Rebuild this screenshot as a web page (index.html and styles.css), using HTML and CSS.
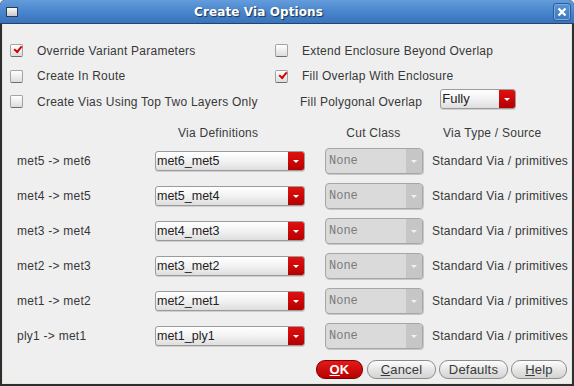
FILE: index.html
```html
<!DOCTYPE html>
<html>
<head>
    <meta charset="UTF-8">
    <title>Create Via Options</title>
    <link rel="stylesheet" href="styles.css">
</head>
<body>
<div class="window">
    <div class="titlebar">
        <span class="winicon"></span>
        <span class="title">Create Via Options</span>
        <span class="closebtn">
            <svg width="10" height="10" viewBox="0 0 10 10"><path d="M1.5 1.5 L8.5 8.5 M8.5 1.5 L1.5 8.5" stroke="#fff" stroke-width="2.4"/></svg>
        </span>
    </div>
    <div class="content">
        <div class="options">
            <div class="opt"><span class="check on"></span>Override Variant Parameters</div>
            <div class="opt"><span class="check"></span>Extend Enclosure Beyond Overlap</div>
            <div class="opt"><span class="check"></span>Create In Route</div>
            <div class="opt"><span class="check on"></span>Fill Overlap With Enclosure</div>
            <div class="opt"><span class="check"></span>Create Vias Using Top Two Layers Only</div>
            <div class="opt nocheck">Fill Polygonal Overlap
                <span class="combo small"><span class="val">Fully</span><span class="arrow"></span></span>
            </div>
        </div>

        <div class="vias">
            <div class="hdr"></div>
            <div class="hdr viadef">Via Definitions</div>
            <div class="hdr center">Cut Class</div>
            <div class="hdr type">Via Type / Source</div>

            <div class="lbl">met5 -&gt; met6</div>
            <div><span class="combo"><span class="val">met6_met5</span><span class="arrow"></span></span></div>
            <div><span class="cut"><span class="val">None</span><span class="arrow"></span></span></div>
            <div class="src">Standard Via / primitives</div>

            <div class="lbl">met4 -&gt; met5</div>
            <div><span class="combo"><span class="val">met5_met4</span><span class="arrow"></span></span></div>
            <div><span class="cut"><span class="val">None</span><span class="arrow"></span></span></div>
            <div class="src">Standard Via / primitives</div>

            <div class="lbl">met3 -&gt; met4</div>
            <div><span class="combo"><span class="val">met4_met3</span><span class="arrow"></span></span></div>
            <div><span class="cut"><span class="val">None</span><span class="arrow"></span></span></div>
            <div class="src">Standard Via / primitives</div>

            <div class="lbl">met2 -&gt; met3</div>
            <div><span class="combo"><span class="val">met3_met2</span><span class="arrow"></span></span></div>
            <div><span class="cut"><span class="val">None</span><span class="arrow"></span></span></div>
            <div class="src">Standard Via / primitives</div>

            <div class="lbl">met1 -&gt; met2</div>
            <div><span class="combo"><span class="val">met2_met1</span><span class="arrow"></span></span></div>
            <div><span class="cut"><span class="val">None</span><span class="arrow"></span></span></div>
            <div class="src">Standard Via / primitives</div>

            <div class="lbl">ply1 -&gt; met1</div>
            <div><span class="combo"><span class="val">met1_ply1</span><span class="arrow"></span></span></div>
            <div><span class="cut"><span class="val">None</span><span class="arrow"></span></span></div>
            <div class="src">Standard Via / primitives</div>
        </div>

        <div class="buttons">
            <span class="btn ok"><u>O</u>K</span>
            <span class="btn cancel"><u>C</u>ancel</span>
            <span class="btn defaults">Defaults</span>
            <span class="btn help"><u>H</u>elp</span>
        </div>
    </div>
</div>
</body>
</html>
```

FILE: styles.css
```css
body{
    margin: 0;
    background: #efefef;
    font-family: "Liberation Sans", Arial, sans-serif;
    font-size: 12px;
    letter-spacing: 0.25px;
    color: #383838;
}
.window{
    width: 574px;
    height: 386px;
    box-sizing: border-box;
    display: flex;
    flex-direction: column;
    background: #2e2e2e;
    border-radius: 5px 5px 0 0;
    overflow: hidden;
}
.titlebar{
    height: 23px;
    border-bottom: 1px solid #23446e;
    background: linear-gradient(#659cdb, #4886cd 50%, #3a73bb);
    display: flex;
    align-items: center;
    border-radius: 5px 5px 0 0;
}
.winicon{
    width: 10px;
    height: 8px;
    margin-left: 6px;
    border: 1px solid #2b3b55;
    background: linear-gradient(#fafafa, #c9c9c9);
}
.title{
    flex: 1;
    text-align: center;
    font-family: "DejaVu Sans", sans-serif;
    font-weight: bold;
    font-size: 12px;
    letter-spacing: 0.1px;
    color: #fff;
    text-shadow: 1px 1px 1px #1b3050;
    margin-right: 54px;
}
.closebtn{
    width: 16px;
    height: 16px;
    margin-right: 3px;
    border: 1px solid #2b5a96;
    border-radius: 3px;
    box-shadow: inset 0 0 0 1px #7fabde;
    display: flex;
    align-items: center;
    justify-content: center;
}
.content{
    flex: 1;
    margin: 0 2px 2px 2px;
    background: #efefef;
    border: 1px solid #e6e6dc;
    border-top: none;
    display: flex;
    flex-direction: column;
}
.options{
    display: grid;
    grid-template-columns: 265px 1fr;
    grid-auto-rows: 25.5px;
    padding: 14px 0 0 7px;
}
.opt{
    display: flex;
    align-items: center;
}
.nocheck{
    padding-left: 25px;
}
.check{
    width: 11px;
    height: 11px;
    margin-right: 14px;
    border: 1px solid #a3a3a3;
    border-bottom-color: #6d6d6d;
    border-radius: 2px;
    background: linear-gradient(#ffffff, #dcdcdc);
    position: relative;
}
.check.on::after{
    content: "";
    position: absolute;
    left: 3px;
    top: 1px;
    width: 6px;
    height: 3px;
    border-left: 2px solid #d40000;
    border-bottom: 2px solid #d40000;
    transform: rotate(-50deg);
}
.combo{
    display: inline-flex;
    width: 148px;
    height: 18px;
    border: 1px solid #9b9b9b;
    border-radius: 3px;
    background: linear-gradient(#ffffff, #f2f2f2 50%, #dedede);
    box-shadow: 0 1px 0 #cfcfcf;
    overflow: hidden;
    vertical-align: middle;
}
.combo.small{
    width: 74px;
    margin-left: 18px;
    margin-top: -5px;
}
.combo .val{
    flex: 1;
    padding-left: 1px;
    line-height: 18px;
    font-size: 12.5px;
    letter-spacing: 0;
    color: #222;
}
.combo.small .val{
    font-size: 13px;
}
.combo .arrow{
    width: 16px;
    background: linear-gradient(#e01010, #b50000);
    position: relative;
}
.arrow::after{
    content: "";
    position: absolute;
    left: 5px;
    top: 8px;
    border-left: 3px solid transparent;
    border-right: 3px solid transparent;
    border-top: 3px solid #fff;
}
.vias{
    display: grid;
    grid-template-columns: 138px 170px 107px 1fr;
    grid-template-rows: 20px;
    grid-auto-rows: 35px;
    padding: 8px 0 0 14px;
}
.vias > div{
    display: flex;
    align-items: center;
}
.hdr{
    color: #3a3a3a;
}
.viadef{
    padding-left: 23px;
}
.center{
    justify-content: center;
    padding-right: 10px;
}
.type{
    padding-left: 11px;
}
.vias .lbl,
.vias .src{
    padding-top: 2px;
}
.cut{
    display: inline-flex;
    width: 96px;
    height: 24px;
    border: 1px solid #a6a6a6;
    border-radius: 4px;
    background: #dadada;
    box-shadow: 1px 1px 0 #c7c7c7;
    overflow: hidden;
    margin-top: 2px;
}
.cut .val{
    flex: 1;
    padding-left: 3px;
    line-height: 24px;
    font-family: "Liberation Mono", monospace;
    font-size: 12px;
    letter-spacing: 0;
    color: #7a7a7a;
}
.cut .arrow{
    width: 16px;
    background: #c6c6c6;
    position: relative;
}
.cut .arrow::after{
    left: 5px;
    top: 11px;
    border-top-color: #f2f2f2;
}
.vias .combo{
    margin-top: 2px;
}
.buttons{
    display: flex;
    justify-content: flex-end;
    gap: 3px;
    padding: 7px 4px 0 0;
}
.btn{
    height: 17px;
    line-height: 17px;
    border: 1px solid #8d8d8d;
    border-radius: 9px;
    background: linear-gradient(#fdfdfd, #e6e6e6 50%, #d3d3d3);
    text-align: center;
    font-size: 13px;
    letter-spacing: 0.2px;
    color: #3a3a3a;
}
.ok{
    width: 45px;
    background: linear-gradient(#e41a1a, #b80000);
    border-color: #7a0000;
    color: #fff;
    font-weight: bold;
    margin-right: 1px;
}
.cancel{
    width: 67px;
}
.defaults{
    width: 67px;
}
.help{
    width: 54px;
}
```
